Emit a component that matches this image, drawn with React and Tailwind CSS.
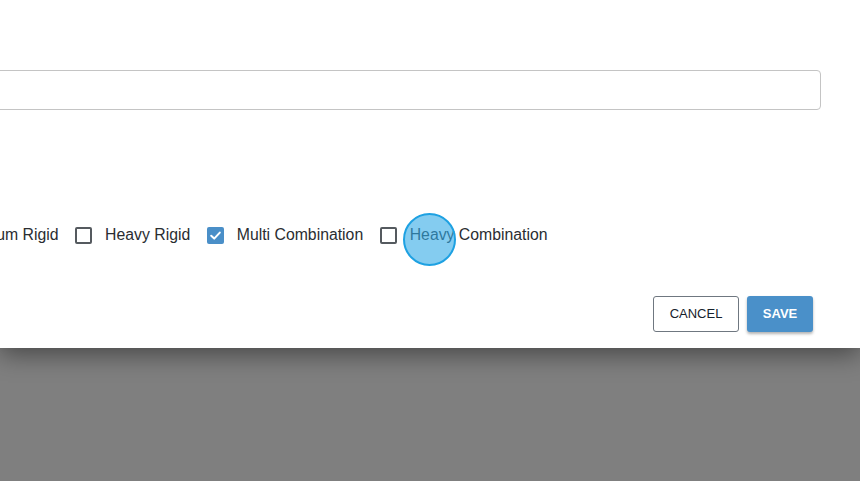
import React from "react";

function Box({ checked }) {
  if (checked) {
    return (
      <span className="flex h-[17px] w-[17px] shrink-0 items-center justify-center rounded-[2px] bg-[#4a8fc8]">
        <svg width="13" height="13" viewBox="0 0 13 13" fill="none">
          <path d="M2.2 6.8 L5.2 9.6 L10.8 3.6" stroke="white" strokeWidth="2" strokeLinecap="round" strokeLinejoin="round" />
        </svg>
      </span>
    );
  }
  return <span className="block h-[17px] w-[17px] shrink-0 rounded-[2px] border-2 border-[#555a5f] bg-white" />;
}

function Item({ label, checked }) {
  return (
    <label className="flex shrink-0 items-center gap-[13px]">
      <Box checked={checked} />
      <span className="whitespace-nowrap">{label}</span>
    </label>
  );
}

export default function App() {
  return (
    <div className="relative h-[481px] w-[860px] overflow-hidden bg-[#7f7f7f] font-['Liberation_Sans',Arial,sans-serif]">
      <div className="relative h-[348px] w-full overflow-hidden bg-white shadow-[0_6px_24px_rgba(0,0,0,0.45)]">
        <div className="flex flex-col pt-[70px] pr-[39px]">
          <div className="ml-[-10px] h-[40px] rounded-[4px] border border-[#c4c4c4] bg-white" />
          <div className="mt-[113px] ml-[-38px] flex h-[24px] items-center gap-[16.5px] text-[15.8px] text-[#2a2d31]">
            <span className="whitespace-nowrap">Medium Rigid</span>
            <Item label="Heavy Rigid" />
            <Item label="Multi Combination" checked />
            <Item label="Heavy Combination" />
          </div>
          <div className="mt-[49px] mr-[8px] flex justify-end gap-[8px]">
            <button className="h-[36px] w-[86px] rounded-[3px] border border-[#6f7780] bg-white text-[13px] text-[#16212c]">
              CANCEL
            </button>
            <button className="h-[36px] w-[66px] rounded-[3px] bg-[#4a90c9] text-[13px] font-bold text-white shadow-[0_2px_3px_rgba(0,0,0,0.3)]">
              SAVE
            </button>
          </div>
        </div>
        <div className="absolute left-[403px] top-[213px] h-[53px] w-[53px] rounded-full border-2 border-[#1ea1e2] bg-[rgba(50,170,230,0.6)]" />
      </div>
    </div>
  );
}
